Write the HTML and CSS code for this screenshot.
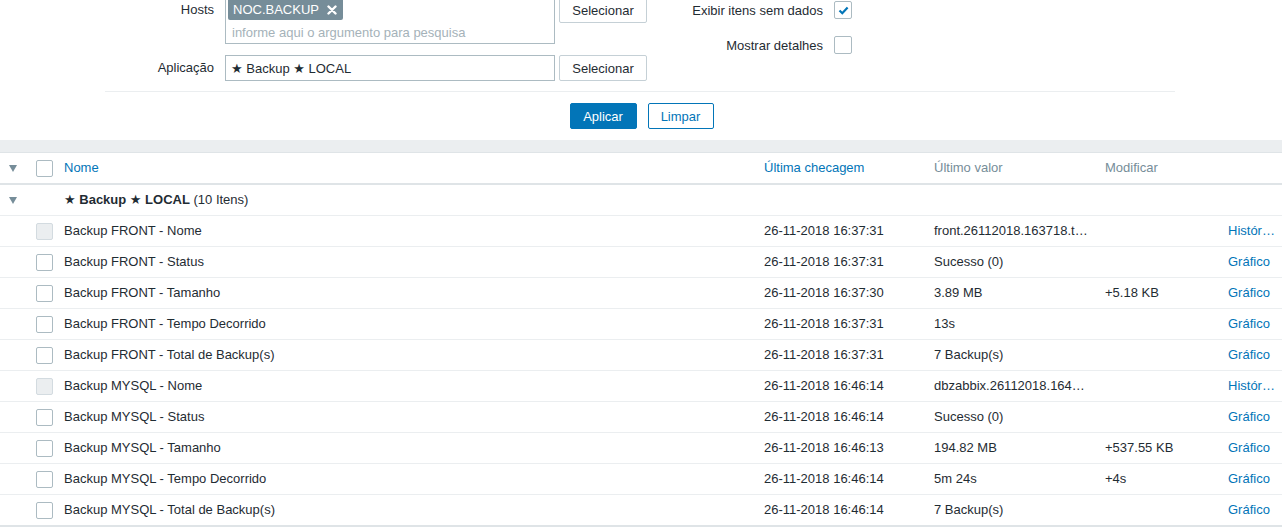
FILE: index.html
```html
<!DOCTYPE html>
<html lang="pt">
<head>
<meta charset="utf-8">
<title>Últimos dados</title>
<link rel="stylesheet" href="styles.css">
</head>
<body>
<div class="filter">
  <div class="filter-form">
    <div class="col-left">
      <div class="frow frow-top">
        <label class="flabel">Hosts</label>
        <div class="multiselect">
          <div class="ms-tags">
            <span class="tag">NOC.BACKUP<svg class="tag-x" width="10" height="10" viewBox="0 0 10 10"><path d="M1.5 1.5L8.5 8.5M8.5 1.5L1.5 8.5" stroke="#fff" stroke-width="2.4" stroke-linecap="round"/></svg></span>
          </div>
          <div class="ms-input">informe aqui o argumento para pesquisa</div>
        </div>
        <button class="btn btn-grey btn-top">Selecionar</button>
      </div>
      <div class="frow frow-mid">
        <label class="flabel">Aplicação</label>
        <div class="text-input">★ Backup ★ LOCAL</div>
        <button class="btn btn-grey">Selecionar</button>
      </div>
    </div>
    <div class="col-right">
      <div class="crow">
        <label class="clabel">Exibir itens sem dados</label>
        <span class="checkbox big checked"><svg width="15" height="15" viewBox="0 0 15 15"><path d="M3.5 7.5L6.3 10.2L11.6 4.6" fill="none" stroke="#0275b8" stroke-width="2.2"/></svg></span>
      </div>
      <div class="crow">
        <label class="clabel">Mostrar detalhes</label>
        <span class="checkbox big"></span>
      </div>
    </div>
  </div>
  <div class="filter-buttons">
    <button class="btn btn-main">Aplicar</button>
    <button class="btn btn-alt">Limpar</button>
  </div>
</div>
<div class="strip"></div>
<table class="list">
  <colgroup>
    <col class="c-arrow"><col class="c-check"><col class="c-name"><col class="c-time"><col class="c-value"><col class="c-change"><col class="c-link">
  </colgroup>
  <thead>
    <tr>
      <th><span class="arrow"></span></th>
      <th><span class="checkbox"></span></th>
      <th class="link">Nome</th>
      <th class="link">Última checagem</th>
      <th class="muted">Último valor</th>
      <th class="muted">Modificar</th>
      <th></th>
    </tr>
  </thead>
  <tbody>
    <tr>
      <td><span class="arrow"></span></td>
      <td></td>
      <td colspan="5"><b>★ Backup ★ LOCAL</b> (10 Itens)</td>
    </tr>
    <tr><td></td><td><span class="checkbox disabled"></span></td><td>Backup FRONT - Nome</td><td>26-11-2018 16:37:31</td><td>front.26112018.163718.t…</td><td></td><td class="link">Histór…</td></tr>
    <tr><td></td><td><span class="checkbox"></span></td><td>Backup FRONT - Status</td><td>26-11-2018 16:37:31</td><td>Sucesso (0)</td><td></td><td class="link">Gráfico</td></tr>
    <tr><td></td><td><span class="checkbox"></span></td><td>Backup FRONT - Tamanho</td><td>26-11-2018 16:37:30</td><td>3.89 MB</td><td>+5.18 KB</td><td class="link">Gráfico</td></tr>
    <tr><td></td><td><span class="checkbox"></span></td><td>Backup FRONT - Tempo Decorrido</td><td>26-11-2018 16:37:31</td><td>13s</td><td></td><td class="link">Gráfico</td></tr>
    <tr><td></td><td><span class="checkbox"></span></td><td>Backup FRONT - Total de Backup(s)</td><td>26-11-2018 16:37:31</td><td>7 Backup(s)</td><td></td><td class="link">Gráfico</td></tr>
    <tr><td></td><td><span class="checkbox disabled"></span></td><td>Backup MYSQL - Nome</td><td>26-11-2018 16:46:14</td><td>dbzabbix.26112018.164…</td><td></td><td class="link">Histór…</td></tr>
    <tr><td></td><td><span class="checkbox"></span></td><td>Backup MYSQL - Status</td><td>26-11-2018 16:46:14</td><td>Sucesso (0)</td><td></td><td class="link">Gráfico</td></tr>
    <tr><td></td><td><span class="checkbox"></span></td><td>Backup MYSQL - Tamanho</td><td>26-11-2018 16:46:13</td><td>194.82 MB</td><td>+537.55 KB</td><td class="link">Gráfico</td></tr>
    <tr><td></td><td><span class="checkbox"></span></td><td>Backup MYSQL - Tempo Decorrido</td><td>26-11-2018 16:46:14</td><td>5m 24s</td><td>+4s</td><td class="link">Gráfico</td></tr>
    <tr class="last"><td></td><td><span class="checkbox"></span></td><td>Backup MYSQL - Total de Backup(s)</td><td>26-11-2018 16:46:14</td><td>7 Backup(s)</td><td></td><td class="link">Gráfico</td></tr>
  </tbody>
</table>
</body>
</html>
```

FILE: styles.css
```css
html, body {
  margin: 0;
  padding: 0;
  background: #fff;
}
body {
  font-family: "Liberation Sans", Arial, "DejaVu Sans", sans-serif;
  font-size: 13px;
  color: #1f2c33;
  overflow: hidden;
}

/* ---------- filter ---------- */
.filter {
  margin-top: -4px;
}
.filter-form {
  width: 1070px;
  margin-left: 105px;
  display: flex;
  padding-bottom: 10px;
  border-bottom: 1px solid #ebeef0;
}
.col-left {
  width: 542px;
  display: flex;
  flex-direction: column;
  gap: 11px;
}
.frow {
  display: flex;
  align-items: flex-start;
}
.frow-mid {
  align-items: center;
}
.flabel {
  width: 109px;
  margin-right: 11px;
  text-align: right;
  line-height: 16px;
}
.frow-top .flabel {
  padding-top: 6px;
}
.multiselect {
  width: 330px;
  height: 48px;
  box-sizing: border-box;
  border: 1px solid #acbbc2;
  padding: 1px 2px;
}
.ms-tags {
  display: flex;
}
.tag {
  display: inline-flex;
  align-items: center;
  height: 22px;
  padding: 1px 6px 0 5px;
  box-sizing: border-box;
  gap: 8px;
  background: #768d99;
  color: #fff;
  border-radius: 2px;
  line-height: 16px;
}
.tag-x {
  display: block;
}
.ms-input {
  padding: 5px 4px 0;
  line-height: 16px;
  color: #a5b2b9;
}
.text-input {
  width: 330px;
  height: 26px;
  box-sizing: border-box;
  border: 1px solid #acbbc2;
  padding: 1px 5px 0;
  line-height: 24px;
}
.btn {
  height: 26px;
  box-sizing: border-box;
  border-radius: 2px;
  background: #fff;
  font: inherit;
  line-height: 24px;
  padding: 0 11px;
  margin: 0;
  cursor: pointer;
}
.btn-grey {
  margin-left: 4px;
  width: 88px;
  padding: 1px 0 0;
  border: 1px solid #c5d0d6;
  color: #1f2c33;
}
.btn-top {
  margin-top: 1px;
}
.col-right {
  width: 214px;
  padding-top: 5px;
  display: flex;
  flex-direction: column;
  gap: 17px;
}
.crow {
  display: flex;
  align-items: center;
}
.clabel {
  width: 176px;
  margin-right: 11px;
  text-align: right;
  line-height: 16px;
  padding-top: 1px;
}
.checkbox {
  display: inline-flex;
  align-items: center;
  justify-content: center;
  width: 17px;
  height: 17px;
  box-sizing: border-box;
  border: 1px solid #acbbc2;
  border-radius: 2px;
  background: #fff;
  vertical-align: middle;
}
.checkbox.big {
  width: 18px;
  height: 18px;
}
.checkbox.disabled {
  background: #ebeef0;
  border-color: #d3dbe0;
}
.filter-buttons {
  display: flex;
  justify-content: center;
  gap: 11px;
  padding: 11px 0 11px 0;
  margin-left: 1px;
}
.btn-main {
  width: 67px;
  padding: 1px 0 0;
  background: #0275b8;
  border: 1px solid #0275b8;
  color: #fff;
}
.btn-alt {
  width: 66px;
  padding: 1px 0 0;
  border: 1px solid #0275b8;
  color: #0275b8;
}
.strip {
  height: 12px;
  background: #ebeef0;
  border-bottom: 1px solid #dfe4e7;
}

/* ---------- table ---------- */
.list {
  width: 100%;
  border-collapse: collapse;
  table-layout: fixed;
}
.c-arrow { width: 31px; }
.c-check { width: 28px; }
.c-name { width: 700px; }
.c-time { width: 170px; }
.c-value { width: 171px; }
.c-change { width: 123px; }
.c-link { width: 59px; }
.list th,
.list td {
  height: 30px;
  padding: 0 5px;
  border-bottom: 1px solid #ebeef0;
  text-align: left;
  font-weight: normal;
  white-space: nowrap;
  overflow: hidden;
  vertical-align: middle;
  line-height: 16px;
}
.list thead th {
  border-bottom: 2px solid #dfe4e7;
}
.list tr.last td {
  border-bottom: 2px solid #dfe4e7;
}
.list td b {
  font-weight: bold;
}
.link {
  color: #0275b8;
}
.list th.muted {
  color: #768d99;
}
.arrow {
  display: block;
  margin-left: 4px;
  width: 0;
  height: 0;
  border-left: 4.5px solid transparent;
  border-right: 4.5px solid transparent;
  border-top: 7px solid #768d99;
}
```
